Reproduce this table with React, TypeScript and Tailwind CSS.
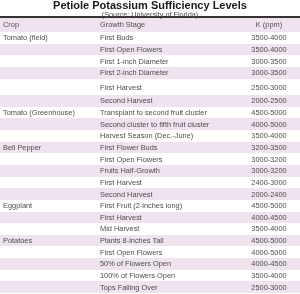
import React from 'react';

interface Row {
  crop?: string;
  stage: string;
  k: string;
  tall?: boolean;
}

const rows: Row[] = [
  { crop: 'Tomato (field)', stage: 'First Buds', k: '3500-4000' },
  { stage: 'First Open Flowers', k: '3500-4000' },
  { stage: 'First 1-inch Diameter', k: '3000-3500' },
  { stage: 'First 2-inch Diameter', k: '3000-3500' },
  { stage: 'First Harvest', k: '2500-3000', tall: true },
  { stage: 'Second Harvest', k: '2000-2500' },
  { crop: 'Tomato (Greenhouse)', stage: 'Transplant to second fruit cluster', k: '4500-5000' },
  { stage: 'Second cluster to fifth fruit cluster', k: '4000-5000' },
  { stage: 'Harvest Season (Dec.-June)', k: '3500-4000' },
  { crop: 'Bell Pepper', stage: 'First Flower Buds', k: '3200-3500' },
  { stage: 'First Open Flowers', k: '3000-3200' },
  { stage: 'Fruits Half-Growth', k: '3000-3200' },
  { stage: 'First Harvest', k: '2400-3000' },
  { stage: 'Second Harvest', k: '2000-2400' },
  { crop: 'Eggplant', stage: 'First Fruit (2-inches long)', k: '4500-5000' },
  { stage: 'First Harvest', k: '4000-4500' },
  { stage: 'Mid Harvest', k: '3500-4000' },
  { crop: 'Potatoes', stage: 'Plants 8-inches Tall', k: '4500-5000' },
  { stage: 'First Open Flowers', k: '4000-5000' },
  { stage: '50% of Flowers Open', k: '4000-4500' },
  { stage: '100% of Flowers Open', k: '3500-4000' },
  { stage: 'Tops Falling Over', k: '2500-3000' },
];

export default function App() {
  return (
    <div className="w-[300px] h-[294px] overflow-hidden bg-white font-['Liberation_Sans',Arial,sans-serif] text-[#4d4d4d] will-change-transform">
      <div className="h-[10px] leading-[10px] text-center text-[11px] font-bold text-[#1a1a1a]">
        Petiole Potassium Sufficiency Levels
      </div>
      <div className="h-[6px] leading-[6px] pt-[1.7px] text-center text-[7.3px]">(Source: University of Florida)</div>
      <div className="h-[2px] bg-[#333333]" />
      <div className="flex h-[14px] items-center bg-[#eee3ef] text-[7.4px]">
        <div className="w-[100px] pl-[3px]">Crop</div>
        <div className="flex-1">Growth Stage</div>
        <div className="w-[44px] text-center mr-[9px]">K (ppm)</div>
      </div>
      {rows.map((r, i) => (
        <div
          key={i}
          className={`flex text-[7.4px] ${r.tall ? 'h-[16.6px] items-start pt-[3px]' : 'h-[11.65px] items-center'} ${
            i % 2 === 1 ? 'bg-[#eee3ef]' : ''
          }`}
        >
          <div className="w-[100px] pl-[3px]">{r.crop ?? ''}</div>
          <div className="flex-1">{r.stage}</div>
          <div className="w-[44px] text-center mr-[9px]">{r.k}</div>
        </div>
      ))}
    </div>
  );
}
